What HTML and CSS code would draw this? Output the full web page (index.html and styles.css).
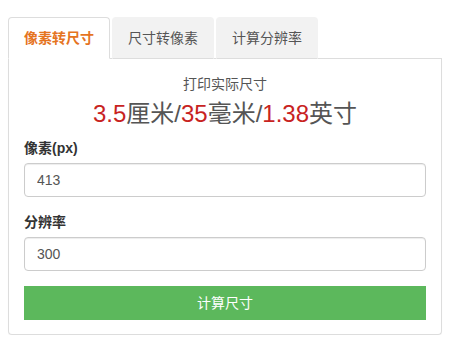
FILE: index.html
```html
<!DOCTYPE html>
<html lang="zh-CN">
<head>
<meta charset="utf-8">
<title>像素转尺寸</title>
<link rel="stylesheet" href="styles.css">
</head>
<body>
<div class="wrap">
  <ul class="tabs">
    <li class="tab active">像素转尺寸</li>
    <li class="tab">尺寸转像素</li>
    <li class="tab">计算分辨率</li>
  </ul>
  <div class="panel">
    <div class="caption">打印实际尺寸</div>
    <div class="result"><span class="num">3.5</span>厘米/<span class="num">35</span>毫米/<span class="num">1.38</span>英寸</div>
    <div class="group">
      <label class="label">像素(px)</label>
      <input class="input" type="text" value="413">
    </div>
    <div class="group">
      <label class="label">分辨率</label>
      <input class="input" type="text" value="300">
    </div>
    <button class="btn" type="button">计算尺寸</button>
  </div>
</div>
</body>
</html>
```
FILE: styles.css
```css
* { box-sizing: border-box; }
body {
  margin: 0;
  padding: 17px 0 0 8px;
  font-family: "Liberation Sans", "Noto Sans CJK SC", sans-serif;
  font-size: 14px;
  line-height: 20px;
  color: #333;
  background: #fff;
}
.wrap { width: 434px; }
.tabs {
  list-style: none;
  margin: 0;
  padding: 0;
  display: flex;
  border-bottom: 1px solid #ddd;
}
.tab {
  width: 102px;
  margin-right: 2px;
  margin-bottom: -1px;
  padding: 10px 0;
  text-align: center;
  color: #555;
  background: #f2f2f2;
  border: 1px solid #f2f2f2;
  border-bottom-color: #ddd;
  border-radius: 4px 4px 0 0;
}
.tab.active {
  background: #fff;
  border-color: #ddd;
  border-bottom-color: #fff;
  color: #e5741f;
  font-weight: bold;
}
.panel {
  border: 1px solid #ddd;
  border-top: none;
  border-radius: 0 0 4px 4px;
  padding: 15px 15px 14px;
  box-shadow: 0 1px 1px rgba(0,0,0,0.04);
}
.caption {
  text-align: center;
  color: #555;
  line-height: 20px;
}
.result {
  text-align: center;
  font-size: 24px;
  line-height: 28px;
  color: #555;
  margin: 6px 0 10px;
}
.num { color: #c8231f; }
.group { margin-bottom: 15px; }
.label {
  display: block;
  font-weight: bold;
  margin-bottom: 5px;
  color: #333;
}
.input {
  display: block;
  width: 100%;
  height: 34px;
  padding: 6px 12px;
  font: inherit;
  color: #555;
  border: 1px solid #ccc;
  border-radius: 4px;
  box-shadow: inset 0 1px 1px rgba(0,0,0,0.075);
  background: #fff;
}
.btn {
  display: block;
  width: 100%;
  height: 34px;
  font: inherit;
  color: #fff;
  background: #5cb85c;
  border: 1px solid #5cb85c;
  border-radius: 0;
  padding: 6px 12px;
}
```
